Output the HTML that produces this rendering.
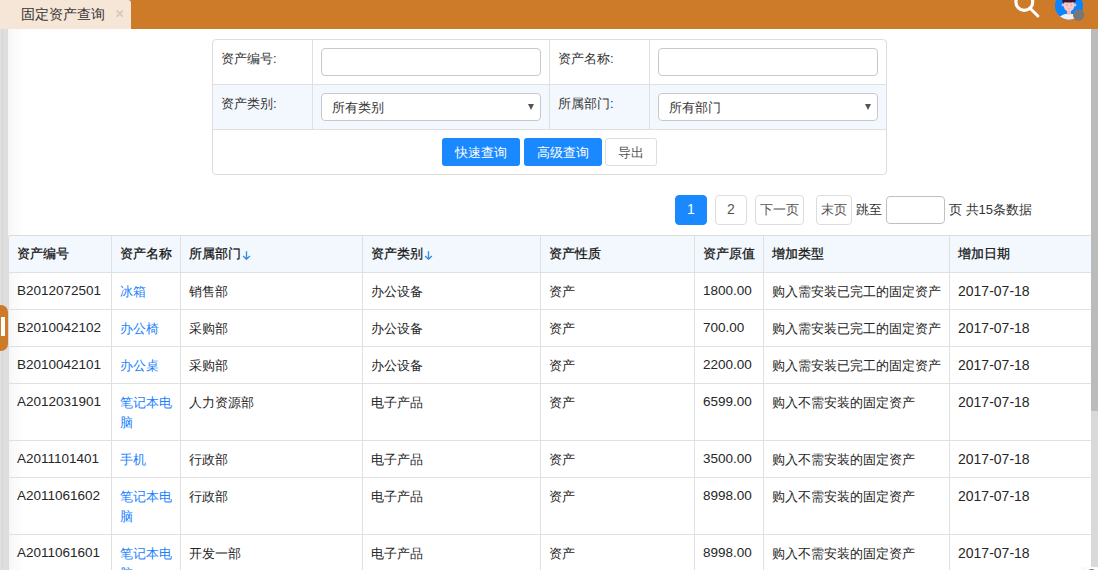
<!DOCTYPE html>
<html><head><meta charset="utf-8">
<style>
*{box-sizing:border-box}
html,body{margin:0;padding:0}
body{width:1098px;height:570px;overflow:hidden;position:relative;background:#fff;font-family:"Liberation Sans", sans-serif;font-size:13px;color:#333}
div{position:absolute}
.hdr{left:0;top:0;width:1098px;height:29px;background:#cd7b28}
.tab{left:0;top:0;width:131px;height:29px;background:#f6e6d8;border-top-right-radius:3px}
.tabt{left:21px;top:4px;font-size:14px;line-height:20px;color:#333;white-space:nowrap}
.tabx{left:115px;top:5px;font-size:13px;line-height:16px;color:#c9bfb6}
.lstrip{left:0;top:29px;width:8px;height:541px;background:linear-gradient(to right,#e2e2e2 0,#e2e2e2 1px,#d9d9d9 1px,#d9d9d9 3px,#dedede 3px,#dedede 8px)}
.lshadow{left:8px;top:29px;width:14px;height:541px;background:linear-gradient(to right,#f5f5f5 0,#fafafa 5px,#fcfcfc 12px,#fff 14px)}
.handle{left:0;top:305px;width:8px;height:46px;background:#cd7b28;border-radius:0 7px 7px 0}
.handlebar{left:1px;top:317px;width:4px;height:19px;background:#fff}
.sb{left:1091px;top:29px;width:7px;height:541px;background:#d9d9d9}
.sbt{left:1091px;top:29px;width:7px;height:382px;background:#bbb}
.thbg{background:#f3f8fe}
.hl{height:1px;background:#e0e0e0}
.vl{width:1px;background:#e0e0e0}
.th{font-weight:500;line-height:20px;white-space:nowrap;color:#111;-webkit-text-stroke:0.25px #111}
.td{line-height:20px;white-space:nowrap;color:#262626}
.link{color:#1a82ff}
.num{font-size:13.5px}
.date{font-size:14px}
.arr{position:static;color:#1a82ff;font-weight:normal;font-size:12px}
.form{left:212px;top:39px;width:675px;height:136px;border:1px solid #ddd;border-radius:4px;background:#fff;overflow:hidden}
.frow2{left:0;top:44px;width:673px;height:46px;background:#f3f8fe;border-top:1px solid #e0e0e0;border-bottom:1px solid #e0e0e0}
.fvl{width:1px;top:0;height:89px;background:#e0e0e0}
.flbl{line-height:20px;white-space:nowrap;color:#333}
.inp{width:220px;height:28px;border:1px solid #c8c8c8;border-radius:4px;background:#fff}
.seltxt{line-height:20px;white-space:nowrap;color:#333}
.tri{width:0;height:0;border-left:3.5px solid transparent;border-right:3.5px solid transparent;border-top:6px solid #555}
.btn{height:28px;border-radius:3px;line-height:28px;padding-top:1px;text-align:center;white-space:nowrap}
.bp{background:#1a89ff;color:#fff}
.bd{background:#fff;border:1px solid #ddd;color:#555;line-height:26px}
.pg{height:30px;border:1px solid #ddd;border-radius:4px;background:#fff;line-height:28px;text-align:center;color:#555;white-space:nowrap}
.pga{background:#1a89ff;border-color:#1a89ff;color:#fff}
.pt{line-height:20px;white-space:nowrap;color:#333}
</style></head><body>
<div class="hdr"></div>
<div class="tab"></div>
<div class="tabt">固定资产查询</div>
<svg style="position:absolute;left:116px;top:10px" width="8" height="8" viewBox="0 0 8 8"><path d="M0.8 0.6L6.8 6.6M6.8 0.6L0.8 6.6" stroke="#d6cabe" stroke-width="1.9"/></svg>
<svg style="position:absolute;left:1005px;top:0" width="40" height="29" viewBox="0 0 40 29">
 <circle cx="19.3" cy="1.9" r="8.4" fill="none" stroke="#fff" stroke-width="3.2"/>
 <line x1="25.6" y1="8.8" x2="32.9" y2="16.0" stroke="#fff" stroke-width="3" stroke-linecap="round"/>
</svg>
<svg style="position:absolute;left:1050px;top:0" width="40" height="29" viewBox="0 0 40 29">
 <defs><clipPath id="av"><circle cx="19" cy="5.7" r="14"/></clipPath></defs>
 <circle cx="19" cy="5.7" r="14" fill="#0a84ff"/>
 <g clip-path="url(#av)">
  <ellipse cx="19" cy="22.5" rx="12.5" ry="9" fill="#eef0f5"/>
  <rect x="17" y="9.5" width="4" height="5" fill="#f2b6b6"/>
  <circle cx="13" cy="5" r="1.4" fill="#f0bcbc"/>
  <circle cx="25" cy="5" r="1.4" fill="#f0bcbc"/>
  <ellipse cx="19" cy="5.6" rx="5.4" ry="5.8" fill="#f5c9c9"/>
  <circle cx="16.9" cy="5" r="0.7" fill="#c09090"/>
  <circle cx="21.1" cy="5" r="0.7" fill="#c09090"/>
  <path d="M17.5 8.2Q19 9.2 20.5 8.2" stroke="#e09a9a" stroke-width="0.6" fill="none"/>
  <ellipse cx="19" cy="0.2" rx="6.6" ry="2.4" fill="#3a1530"/>
  <rect x="12.6" y="-2" width="1.6" height="5" fill="#3a1530"/>
  <rect x="23.8" y="-2" width="1.6" height="4" fill="#3a1530"/>
 </g>
 <circle cx="28.7" cy="15" r="5.7" fill="#777"/>
</svg>
<div class="lstrip"></div>
<div class="lshadow"></div>

<div class="form">
 <div class="frow2"></div>
 <div class="fvl" style="left:99px"></div>
 <div class="fvl" style="left:336px"></div>
 <div class="fvl" style="left:436px"></div>
 <div class="flbl" style="left:8px;top:9px">资产编号:</div>
 <div class="flbl" style="left:345px;top:9px">资产名称:</div>
 <div class="flbl" style="left:8px;top:54px">资产类别:</div>
 <div class="flbl" style="left:345px;top:54px">所属部门:</div>
 <div class="inp" style="left:108px;top:8px"></div>
 <div class="inp" style="left:445px;top:8px"></div>
 <div class="inp" style="left:108px;top:53px"></div>
 <div class="inp" style="left:445px;top:53px"></div>
 <div class="seltxt" style="left:119px;top:58px">所有类别</div>
 <div class="seltxt" style="left:456px;top:58px">所有部门</div>
 <div class="tri" style="left:315px;top:64px"></div>
 <div class="tri" style="left:652px;top:64px"></div>
</div>
<div class="btn bp" style="left:442px;top:138px;width:78px">快速查询</div>
<div class="btn bp" style="left:524px;top:138px;width:78px">高级查询</div>
<div class="btn bd" style="left:605px;top:138px;width:52px">导出</div>

<div class="pg pga" style="left:675px;top:195px;width:32px;font-size:14px;line-height:27px">1</div>
<div class="pg" style="left:715px;top:195px;width:32px;font-size:14px;line-height:27px">2</div>
<div class="pg" style="left:755px;top:195px;width:49px">下一页</div>
<div class="pg" style="left:816px;top:195px;width:36px">末页</div>
<div class="pt" style="left:856px;top:200px">跳至</div>
<div class="inp" style="left:886px;top:196px;width:59px;height:28px;border-color:#c0c0c0"></div>
<div class="pt" style="left:949px;top:200px">页 共15条数据</div>

<div class="thbg" style="left:8px;top:235px;width:1090px;height:37px;border-top-left-radius:3px"></div>
<div style="left:8px;top:235px;width:1200px;height:600px;border-left:1px solid #dcdcdc;border-top:1px solid #dcdcdc;border-top-left-radius:3px"></div>
<div class="hl" style="left:8px;top:272px;width:1090px"></div>
<div class="hl" style="left:8px;top:309px;width:1090px"></div>
<div class="hl" style="left:8px;top:346px;width:1090px"></div>
<div class="hl" style="left:8px;top:383px;width:1090px"></div>
<div class="hl" style="left:8px;top:440px;width:1090px"></div>
<div class="hl" style="left:8px;top:477px;width:1090px"></div>
<div class="hl" style="left:8px;top:534px;width:1090px"></div>
<div class="hl" style="left:8px;top:591px;width:1090px"></div>
<div class="vl" style="left:111px;top:235px;height:335px"></div>
<div class="vl" style="left:180px;top:235px;height:335px"></div>
<div class="vl" style="left:362px;top:235px;height:335px"></div>
<div class="vl" style="left:540px;top:235px;height:335px"></div>
<div class="vl" style="left:694px;top:235px;height:335px"></div>
<div class="vl" style="left:763px;top:235px;height:335px"></div>
<div class="vl" style="left:949px;top:235px;height:335px"></div>
<div class="th" style="left:17px;top:244px">资产编号</div>
<div class="th" style="left:120px;top:244px">资产名称</div>
<div class="th" style="left:189px;top:244px">所属部门</div>
<div class="th" style="left:371px;top:244px">资产类别</div>
<div class="th" style="left:549px;top:244px">资产性质</div>
<div class="th" style="left:703px;top:244px">资产原值</div>
<div class="th" style="left:772px;top:244px">增加类型</div>
<div class="th" style="left:958px;top:244px">增加日期</div>
<div class="td num" style="left:17px;top:281px">B2012072501</div>
<div class="td link" style="left:120px;top:282px">冰箱</div>
<div class="td" style="left:189px;top:282px">销售部</div>
<div class="td" style="left:371px;top:282px">办公设备</div>
<div class="td" style="left:549px;top:282px">资产</div>
<div class="td num" style="left:703px;top:281px">1800.00</div>
<div class="td" style="left:772px;top:282px">购入需安装已完工的固定资产</div>
<div class="td num date" style="left:958px;top:281px">2017-07-18</div>
<div class="td num" style="left:17px;top:318px">B2010042102</div>
<div class="td link" style="left:120px;top:319px">办公椅</div>
<div class="td" style="left:189px;top:319px">采购部</div>
<div class="td" style="left:371px;top:319px">办公设备</div>
<div class="td" style="left:549px;top:319px">资产</div>
<div class="td num" style="left:703px;top:318px">700.00</div>
<div class="td" style="left:772px;top:319px">购入需安装已完工的固定资产</div>
<div class="td num date" style="left:958px;top:318px">2017-07-18</div>
<div class="td num" style="left:17px;top:355px">B2010042101</div>
<div class="td link" style="left:120px;top:356px">办公桌</div>
<div class="td" style="left:189px;top:356px">采购部</div>
<div class="td" style="left:371px;top:356px">办公设备</div>
<div class="td" style="left:549px;top:356px">资产</div>
<div class="td num" style="left:703px;top:355px">2200.00</div>
<div class="td" style="left:772px;top:356px">购入需安装已完工的固定资产</div>
<div class="td num date" style="left:958px;top:355px">2017-07-18</div>
<div class="td num" style="left:17px;top:392px">A2012031901</div>
<div class="td link" style="left:120px;top:393px">笔记本电<br>脑</div>
<div class="td" style="left:189px;top:393px">人力资源部</div>
<div class="td" style="left:371px;top:393px">电子产品</div>
<div class="td" style="left:549px;top:393px">资产</div>
<div class="td num" style="left:703px;top:392px">6599.00</div>
<div class="td" style="left:772px;top:393px">购入不需安装的固定资产</div>
<div class="td num date" style="left:958px;top:392px">2017-07-18</div>
<div class="td num" style="left:17px;top:449px">A2011101401</div>
<div class="td link" style="left:120px;top:450px">手机</div>
<div class="td" style="left:189px;top:450px">行政部</div>
<div class="td" style="left:371px;top:450px">电子产品</div>
<div class="td" style="left:549px;top:450px">资产</div>
<div class="td num" style="left:703px;top:449px">3500.00</div>
<div class="td" style="left:772px;top:450px">购入不需安装的固定资产</div>
<div class="td num date" style="left:958px;top:449px">2017-07-18</div>
<div class="td num" style="left:17px;top:486px">A2011061602</div>
<div class="td link" style="left:120px;top:487px">笔记本电<br>脑</div>
<div class="td" style="left:189px;top:487px">行政部</div>
<div class="td" style="left:371px;top:487px">电子产品</div>
<div class="td" style="left:549px;top:487px">资产</div>
<div class="td num" style="left:703px;top:486px">8998.00</div>
<div class="td" style="left:772px;top:487px">购入不需安装的固定资产</div>
<div class="td num date" style="left:958px;top:486px">2017-07-18</div>
<div class="td num" style="left:17px;top:543px">A2011061601</div>
<div class="td link" style="left:120px;top:544px">笔记本电<br>脑</div>
<div class="td" style="left:189px;top:544px">开发一部</div>
<div class="td" style="left:371px;top:544px">电子产品</div>
<div class="td" style="left:549px;top:544px">资产</div>
<div class="td num" style="left:703px;top:543px">8998.00</div>
<div class="td" style="left:772px;top:544px">购入不需安装的固定资产</div>
<div class="td num date" style="left:958px;top:543px">2017-07-18</div>
<svg style="position:absolute;left:242px;top:251px" width="9" height="9" viewBox="0 0 9 9"><path d="M4.5 0.3V8.2M1.1 5.1L4.5 8.2L7.9 5.1" fill="none" stroke="#3a89dc" stroke-width="1.35"/></svg>
<svg style="position:absolute;left:424px;top:251px" width="9" height="9" viewBox="0 0 9 9"><path d="M4.5 0.3V8.2M1.1 5.1L4.5 8.2L7.9 5.1" fill="none" stroke="#3a89dc" stroke-width="1.35"/></svg>
<div class="handle"></div>
<div class="handlebar"></div>
<div class="sb"></div>
<div class="sbt"></div>
<div style="left:1081px;top:567px;width:17px;height:3px;background:#fafafa"></div>
<svg style="position:absolute;left:1080px;top:560px" width="18" height="10" viewBox="0 0 18 10"><circle cx="11.6" cy="14.5" r="6.5" fill="#7a7a7a" stroke="#fff" stroke-width="2"/></svg>
</body></html>
